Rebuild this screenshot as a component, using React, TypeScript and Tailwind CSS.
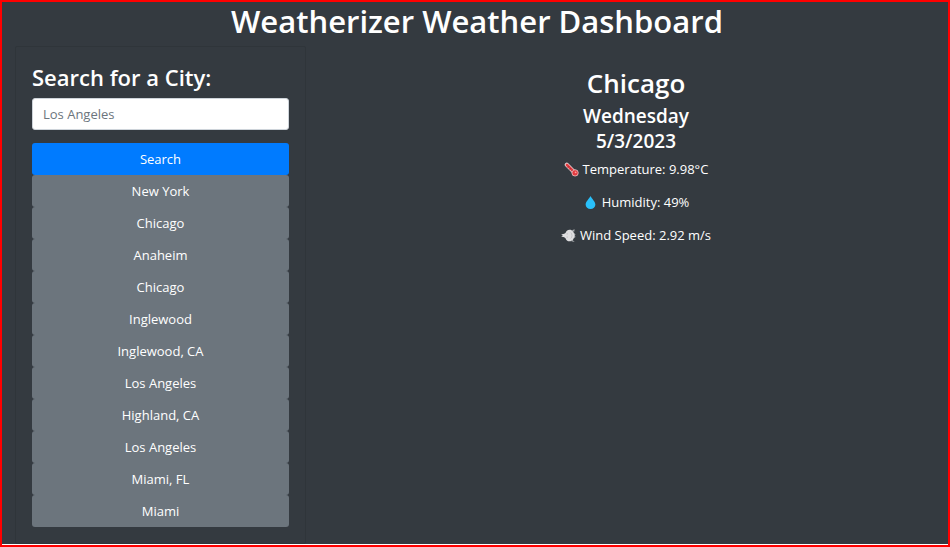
import React, { useState } from "react";

const history = [
  "New York",
  "Chicago",
  "Anaheim",
  "Chicago",
  "Inglewood",
  "Inglewood, CA",
  "Los Angeles",
  "Highland, CA",
  "Los Angeles",
  "Miami, FL",
  "Miami",
];

function Thermometer() {
  return (
    <svg viewBox="0 0 16 16" className="size-[15px]" aria-hidden="true">
      <path d="M3 3 11.5 11.4" stroke="#e8d0d2" strokeWidth="4.4" strokeLinecap="round" />
      <path d="M3.2 3.2 11.5 11.4" stroke="#e23b40" strokeWidth="2.8" strokeLinecap="round" />
      <circle cx="11.8" cy="11.6" r="3.4" fill="#e23b40" stroke="#e8d0d2" strokeWidth="0.8" />
      <path d="m4 6 1.4-1.4M6 8l1.4-1.4M8 9.8l1-1" stroke="#7d2730" strokeWidth="0.8" />
      <circle cx="12.4" cy="11" r="1" fill="#ff9b9b" />
    </svg>
  );
}

function Droplet() {
  return (
    <svg viewBox="0 0 16 16" className="size-[15px]" aria-hidden="true">
      <path d="M8 1C6.7 3.8 2.8 7 2.8 10.1a5.2 4.9 0 0 0 10.4 0C13.2 7 9.3 3.8 8 1Z" fill="#29c0fa" />
    </svg>
  );
}

function WindFace() {
  return (
    <svg viewBox="0 0 16 16" className="size-[15px]" aria-hidden="true">
      <path d="m11.6 2.4 3-1.2-.6 3ZM12 12.6l2.6 2.2-3.6-.6Z" fill="#a5a8ab" />
      <path d="M14 5.4 15.4 6.6 14.8 8l.6 1.6L14 11Z" fill="#b4b6b9" />
      <path d="M9.2 1.8c3 0 5 2.7 5 6.2s-2 6.2-5 6.2c-2.4 0-3.8-1.4-4.4-3.4L3.4 9.8.2 9 2 8 .2 7l3.2-.8 1.4-1C5.400 3.200 6.800 1.800 9.200 1.800Z" fill="#dedee0" />
      <path d="M10.4 4.8c1.8 1.7 1.8 4.700 0 6.400" fill="none" stroke="#bcbcc0" strokeWidth="0.9" />
      <path d="M6.600 5.800v1M6.600 9.200v1" stroke="#a9a9ae" strokeWidth="0.9" />
    </svg>
  );
}

function Reading({ icon, children }: { icon: React.ReactNode; children: React.ReactNode }) {
  return (
    <p className="flex h-5 items-center justify-center gap-1 text-[13px] leading-5">
      {icon}
      <span>{children}</span>
    </p>
  );
}

export default function App() {
  const [city, setCity] = useState("");
  return (
    <div className="min-h-screen border-2 border-[#ff0000] bg-white pb-px font-['Open_Sans','Noto_Sans',sans-serif] text-white">
      <div className="bg-[#343a40]">
        <h1 className="h-11 pl-1 text-center text-[31px] leading-[38px] font-semibold">
          Weatherizer Weather Dashboard
        </h1>
        <div className="grid grid-cols-[291px_1fr] gap-[18px] pl-[13px]">
          <aside className="rounded-xs border border-[#2f353a] p-4">
            <form onSubmit={(e) => e.preventDefault()}>
              <label htmlFor="city" className="block pb-1.5 text-[22px] leading-[29px] font-semibold">
                Search for a City:
              </label>
              <input
                id="city"
                type="text"
                value={city}
                onChange={(e) => setCity(e.target.value)}
                placeholder="Los Angeles"
                className="block h-8 w-full rounded-[3px] border border-[#ced4da] bg-white px-2.5 text-[13px] text-[#495057] placeholder:text-[#6c757d]"
              />
              <button type="submit" className="mt-[13px] block h-8 w-full rounded-[3px] bg-[#007bff] pt-0.5 text-[13px]">
                Search
              </button>
            </form>
            {history.map((name, i) => (
              <button key={i} type="button" className="block h-8 w-full rounded-[3px] bg-[#6c757d] pt-0.5 text-[13px]">
                {name}
              </button>
            ))}
          </aside>
          <main className="pt-5 text-center">
            <h2 className="pb-1 text-[26px] leading-[34px] font-semibold">Chicago</h2>
            <h3 className="text-[19px] leading-[25px] font-semibold">
              Wednesday
              <br />
              5/3/2023
            </h3>
            <div className="flex flex-col gap-[13px] pt-[5px]">
              <Reading icon={<Thermometer />}>Temperature: 9.98°C</Reading>
              <Reading icon={<Droplet />}>Humidity: 49%</Reading>
              <Reading icon={<WindFace />}>Wind Speed: 2.92 m/s</Reading>
            </div>
          </main>
        </div>
      </div>
    </div>
  );
}
